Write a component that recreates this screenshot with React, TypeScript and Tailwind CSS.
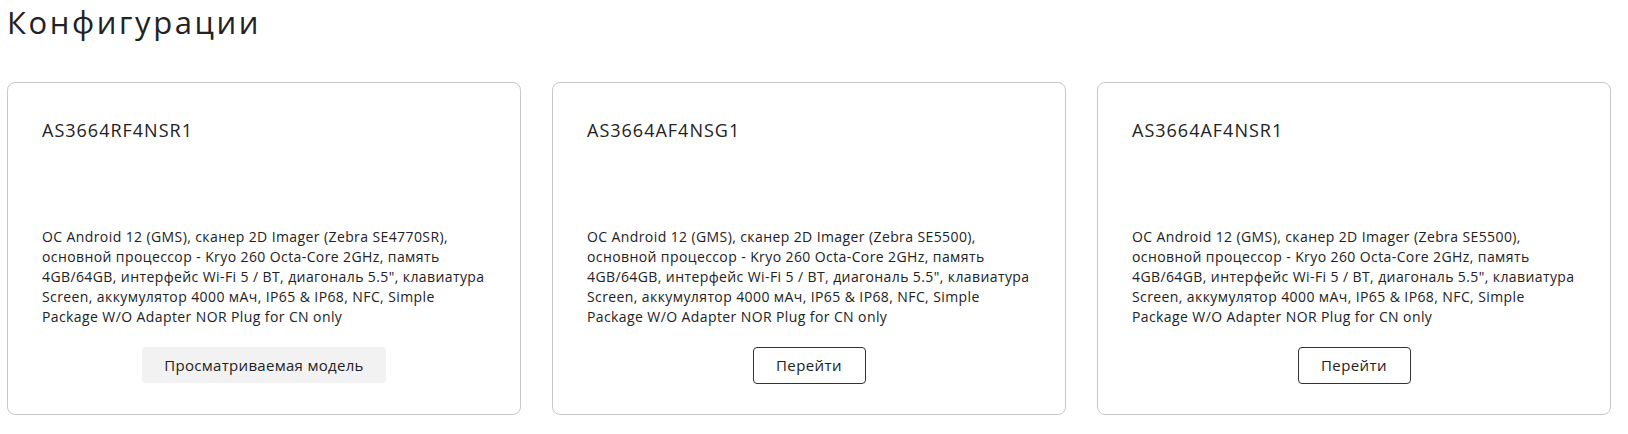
import React from "react";

const tail = [
  "основной процессор - Kryo 260 Octa-Core 2GHz, память",
  '4GB/64GB, интерфейс Wi-Fi 5 / BT, диагональ 5.5", клавиатура',
  "Screen, аккумулятор 4000 мАч, IP65 & IP68, NFC, Simple",
  "Package W/O Adapter NOR Plug for CN only",
];

const cards = [
  {
    title: "AS3664RF4NSR1",
    lines: ["ОС Android 12 (GMS), сканер 2D Imager (Zebra SE4770SR),", ...tail],
    current: true,
  },
  {
    title: "AS3664AF4NSG1",
    lines: ["ОС Android 12 (GMS), сканер 2D Imager (Zebra SE5500),", ...tail],
    current: false,
  },
  {
    title: "AS3664AF4NSR1",
    lines: ["ОС Android 12 (GMS), сканер 2D Imager (Zebra SE5500),", ...tail],
    current: false,
  },
];

export default function App() {
  return (
    <div className="min-h-[434px] bg-white pl-[7px] text-[#222222] [font-family:'Open_Sans',sans-serif]">
      <h1 className="pt-[2px] text-[31px] leading-[40px] font-normal tracking-[2.6px]">Конфигурации</h1>
      <div className="mt-[40px] flex gap-[31px]">
        {cards.map((c) => (
          <div
            key={c.title}
            className="flex h-[333px] w-[514px] flex-col rounded-[8px] border border-[#c8c8c8] px-[34px] pt-[35px]"
          >
            <div className="text-[18px] leading-[24px] tracking-[1px]">{c.title}</div>
            <p className="mt-[85px] text-[14px] leading-[20px] tracking-[0.4px] whitespace-nowrap">
              {c.lines.map((l, i) => (
                <React.Fragment key={i}>
                  {l}
                  {i < c.lines.length - 1 && <br />}
                </React.Fragment>
              ))}
            </p>
            <div className="mt-[20px] flex justify-center">
              {c.current ? (
                <button className="h-[36px] w-[244px] rounded-[4px] bg-[#f2f2f2] text-[15px] tracking-[0.3px] text-[#222222]">
                  Просматриваемая модель
                </button>
              ) : (
                <button className="h-[37px] w-[113px] rounded-[4px] border border-[#333333] bg-white text-[15px] tracking-[0.4px] text-[#222222]">
                  Перейти
                </button>
              )}
            </div>
          </div>
        ))}
      </div>
    </div>
  );
}
